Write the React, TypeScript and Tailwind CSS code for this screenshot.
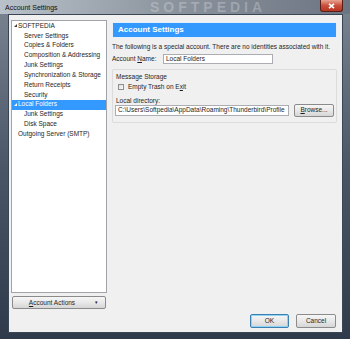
import React from 'react';

const font = { fontFamily: '"Liberation Sans", Arial, sans-serif' };

function Expander({ light }: { light?: boolean }) {
  return (
    <svg width="3" height="3" viewBox="0 0 3 3" className="shrink-0">
      <polygon points="3,0 3,3 0,3" fill={light ? '#ffffff' : '#3c3c3c'} />
    </svg>
  );
}

interface TreeItem {
  label: string;
  level: number;
  expander?: boolean;
  selected?: boolean;
}

const items: TreeItem[] = [
  { label: 'SOFTPEDIA', level: 0, expander: true },
  { label: 'Server Settings', level: 1 },
  { label: 'Copies & Folders', level: 1 },
  { label: 'Composition & Addressing', level: 1 },
  { label: 'Junk Settings', level: 1 },
  { label: 'Synchronization & Storage', level: 1 },
  { label: 'Return Receipts', level: 1 },
  { label: 'Security', level: 1 },
  { label: 'Local Folders', level: 0, expander: true, selected: true },
  { label: 'Junk Settings', level: 1 },
  { label: 'Disk Space', level: 1 },
  { label: 'Outgoing Server (SMTP)', level: 0 },
];

function Button({ children, className = '', focused }: { children: React.ReactNode; className?: string; focused?: boolean }) {
  return (
    <div
      className={`flex items-center justify-center rounded-[2px] border bg-gradient-to-b from-[#f6f6f6] via-[#e8e8e8] to-[#d6d6d6] text-[6.5px] text-[#1e1e1e] ${
        focused ? 'border-[#3c7fb1] shadow-[inset_0_0_0_1px_#8fd3f5]' : 'border-[#8b8b8b]'
      } ${className}`}
    >
      {children}
    </div>
  );
}

export default function App() {
  return (
    <div
      className="flex h-[339px] w-[350px] flex-col overflow-hidden bg-gradient-to-b from-[#7b8592] via-[#4a5566] to-[#2f3a4a]"
      style={font}
    >
      {/* title bar */}
      <div className="relative flex h-[14px] items-center bg-gradient-to-r from-[#b9c1ca] via-[#8b939d] to-[#6c7582] pl-[5px]">
        <span className="text-[7px] leading-none text-[#101010]">Account Settings</span>
        <span className="absolute left-[150px] top-0 text-[14px] font-bold leading-[14px] tracking-[4px] text-white/25">
          SOFTPEDIA
        </span>
        <div className="absolute right-[7px] top-0 flex h-[12px] w-[23px] items-center justify-center rounded-b-[3px] border border-t-0 border-[#5a1e17] bg-gradient-to-b from-[#e9a293] via-[#c8503c] to-[#b73622]">
          <svg width="7" height="6" viewBox="0 0 7 6">
            <path d="M1 0.8 L6 5.2 M6 0.8 L1 5.2" stroke="#ffffff" strokeWidth="1.6" />
          </svg>
        </div>
      </div>

      {/* body */}
      <div className="flex flex-1 px-[7px] pl-[8px]">
        <div className="flex flex-1 flex-col border border-[#3a4556] bg-[#f0f0f0] px-[2px] pb-[3px] pt-[5px]">
          <div className="flex h-[289px] gap-[5px]">
            {/* left column */}
            <div className="flex w-[96px] flex-col gap-[3px]">
              <div className="flex-1 border border-[#a0a4aa] bg-white">
                {items.map((it, i) => (
                  <div
                    key={i}
                    className={`flex h-[9.85px] items-center text-[6.5px] leading-none ${
                      it.selected ? 'bg-[#3399ff] text-white' : 'text-[#1e1e1e]'
                    } ${it.level === 0 ? 'pl-[2px]' : 'pl-[8px]'}`}
                  >
                    <span className="flex w-[4px] items-center">{it.expander && <Expander light={it.selected} />}</span>
                    <span className="whitespace-nowrap">{it.label}</span>
                  </div>
                ))}
              </div>
              <Button className="relative mx-[1px] h-[13px]">
                <span className="-ml-[14px]">
                  <span className="underline">A</span>ccount Actions
                </span>
                <span className="absolute right-[7px] text-[5px]">▾</span>
              </Button>
            </div>

            {/* right column */}
            <div className="flex flex-1 flex-col pr-[3px] pt-[2px]">
              <div className="flex h-[16px] items-center border border-[#e6f0fa] bg-[#3399ff] pl-[5px] text-[8px] font-bold text-white">
                Account Settings
              </div>
              <div className="mt-[4px] h-[9px] whitespace-nowrap text-[6.5px] leading-[9px] text-[#1e1e1e]">
                The following is a special account. There are no identities associated with it.
              </div>
              <div className="mt-[2.5px] flex h-[10px] items-center text-[6.5px] text-[#1e1e1e]">
                <span className="w-[51px]">
                  Account <span className="underline">N</span>ame:
                </span>
                <div className="flex h-[10px] w-[110px] items-center border border-[#abadb3] bg-white pl-[2px]">
                  Local Folders
                </div>
              </div>

              <div className="mt-[5px] flex h-[54px] flex-col rounded-[2px] border border-[#dcdcdc] bg-[#f0f0f0] px-[2px] text-[6.5px] text-[#1e1e1e]">
                <div className="mt-[2px] pl-[1px] leading-[9px]">Message Storage</div>
                <div className="mt-[2px] flex h-[9px] items-center pl-[3px]">
                  <div className="h-[6px] w-[6px] border border-[#8e8f8f] bg-gradient-to-br from-[#dcdcdc] to-[#fdfdfd]" />
                  <span className="ml-[4px]">
                    Empty Trash on E<span className="underline">x</span>it
                  </span>
                </div>
                <div className="mt-[4px] pl-[1px] leading-[9px]">Local directory:</div>
                <div className="mt-[-1px] flex items-center">
                  <div className="flex h-[11px] w-[174px] items-center overflow-hidden whitespace-nowrap border border-[#abadb3] bg-white pl-[2px]">
                    C:\Users\Softpedia\AppData\Roaming\Thunderbird\Profile
                  </div>
                  <Button className="ml-[5px] h-[13px] w-[40px]">
                    <span>
                      <span className="underline">B</span>rowse...
                    </span>
                  </Button>
                </div>
              </div>
            </div>
          </div>

          <div className="mt-[5px] flex h-[14px] justify-end gap-[7px] pr-[4px]">
            <Button focused className="h-[14px] w-[39px]">OK</Button>
            <Button className="h-[14px] w-[40px]">Cancel</Button>
          </div>
        </div>
      </div>
      <div className="h-[6px]" />
    </div>
  );
}
